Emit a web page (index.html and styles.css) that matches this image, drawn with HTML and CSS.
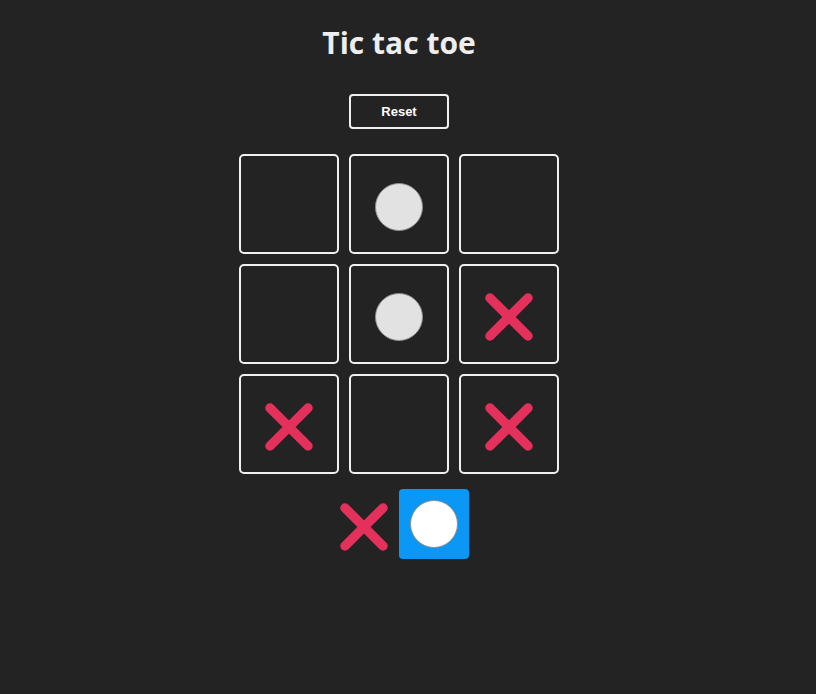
FILE: index.html
```html
<!DOCTYPE html>
<html>
<head>
<meta charset="utf-8">
<link rel="stylesheet" href="styles.css">
</head>
<body>
<main class="app">
  <h1 class="title">Tic tac toe</h1>
  <button class="reset">Reset</button>
  <div class="board">
    <div class="cell"></div>
    <div class="cell"><span class="o"></span></div>
    <div class="cell"></div>
    <div class="cell"></div>
    <div class="cell"><span class="o"></span></div>
    <div class="cell"><svg class="x" viewBox="0 0 48 48"><path d="M5 5L43 43M43 5L5 43"/></svg></div>
    <div class="cell"><svg class="x" viewBox="0 0 48 48"><path d="M5 5L43 43M43 5L5 43"/></svg></div>
    <div class="cell"></div>
    <div class="cell"><svg class="x" viewBox="0 0 48 48"><path d="M5 5L43 43M43 5L5 43"/></svg></div>
  </div>
  <div class="turns">
    <div class="turn"><svg class="x" viewBox="0 0 48 48"><path d="M5 5L43 43M43 5L5 43"/></svg></div>
    <div class="turn active"><span class="o white"></span></div>
  </div>
</main>
</body>
</html>
```
FILE: styles.css
```css
html, body {
  margin: 0;
  background: #232323;
}
body {
  padding-right: 18px;
  font-family: "Open Sans", "Noto Sans", sans-serif;
  color: #eeeeee;
}
.app {
  display: flex;
  flex-direction: column;
  align-items: center;
  padding-top: 22px;
}
.title {
  margin: 0;
  font-size: 30px;
  font-weight: 700;
  line-height: 41px;
  color: #eeeeee;
}
.reset {
  margin-top: 31px;
  width: 100px;
  height: 35px;
  background: transparent;
  border: 2px solid #f0f0f0;
  border-radius: 4px;
  color: #ffffff;
  font-family: "Liberation Sans", Arial, sans-serif;
  font-weight: 700;
  font-size: 13px;
  padding: 0;
}
.board {
  margin-top: 25px;
  display: grid;
  grid-template-columns: repeat(3, 100px);
  grid-auto-rows: 100px;
  gap: 10px;
}
.cell {
  box-sizing: border-box;
  border: 2px solid #f0f0f0;
  border-radius: 5px;
  display: flex;
  align-items: center;
  justify-content: center;
}
.cell > .o,
.cell > .x,
.turn:not(.active) > .x {
  margin-top: 6px;
}
.o {
  box-sizing: border-box;
  width: 48px;
  height: 48px;
  border-radius: 50%;
  background: #e2e2e2;
  border: 1.5px solid #8f8f8f;
}
.o.white {
  background: #ffffff;
}
.x {
  width: 48px;
  height: 48px;
}
.x path {
  stroke: #e3315c;
  stroke-width: 9.5;
  stroke-linecap: round;
  fill: none;
}
.turns {
  margin-top: 15px;
  display: flex;
}
.turn {
  width: 70px;
  height: 70px;
  border-radius: 4px;
  display: flex;
  align-items: center;
  justify-content: center;
}
.turn.active {
  background: #0a97f5;
}
```
